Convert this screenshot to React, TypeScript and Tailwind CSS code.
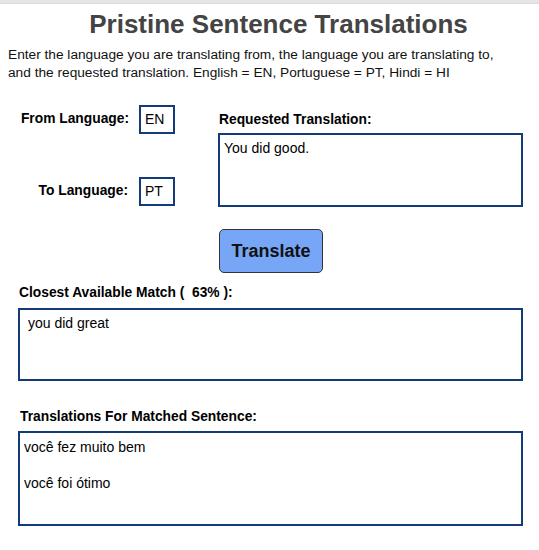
import React from "react";

export default function App() {
  const font = { fontFamily: '"Liberation Sans", Arial, sans-serif' };
  return (
    <div className="w-[539px] h-[550px] bg-white text-black overflow-hidden" style={font}>
      <div className="h-[4px] bg-[#e6e6e6] border-b border-[#dcdcdc]" />
      <h1 className="mt-[4px] pl-[18px] text-center text-[26px] leading-[32px] font-bold text-[#444444]">
        Pristine Sentence Translations
      </h1>
      <p className="mt-[6px] w-[510px] px-[8px] text-[13.7px] leading-[18px] text-[#111]">
        Enter the language you are translating from, the language you are translating to, and the requested translation. English = EN, Portuguese = PT, Hindi = HI
      </p>
      <div className="mt-[23px] flex">
        <div className="w-[218px] flex flex-col gap-[43px]">
          <div className="flex items-center">
            <span className="w-[129px] text-right text-[13.8px] font-bold pr-0">From Language:</span>
            <div className="ml-[10px] w-[36px] h-[29px] border-2 border-[#123b78] px-[4px] text-[14px] leading-[24px]">EN</div>
          </div>
          <div className="flex items-center">
            <span className="w-[128px] text-right text-[13.8px] font-bold">To Language:</span>
            <div className="ml-[11px] w-[36px] h-[29px] border-2 border-[#123b78] px-[4px] text-[14px] leading-[24px]">PT</div>
          </div>
        </div>
        <div className="flex flex-col">
          <div className="pt-[7px] pl-[1px] text-[13.8px] leading-[16px] font-bold">Requested Translation:</div>
          <div className="mt-[5px] w-[305px] h-[74px] border-2 border-[#123b78] pl-[4px] pt-[5px] text-[14px] leading-[16px]">
            You did good.
          </div>
          <button className="mt-[22px] ml-[1px] w-[104px] h-[44px] rounded-[5px] border border-[#333] bg-[#77a6f7] text-[18px] font-bold text-[#111]">
            Translate
          </button>
        </div>
      </div>
      <div className="mt-[12px] pl-[19px] text-[13.8px] leading-[16px] font-bold">
        Closest Available Match (&nbsp; 63% ):
      </div>
      <div className="mt-[7px] ml-[18px] w-[505px] h-[73px] border-2 border-[#123b78] pl-[8px] pt-[5px] text-[14px] leading-[16px]">
        you did great
      </div>
      <div className="mt-[28px] pl-[20px] text-[13.8px] leading-[16px] font-bold">
        Translations For Matched Sentence:
      </div>
      <div className="mt-[6px] ml-[18px] w-[505px] h-[95px] border-2 border-[#123b78] pl-[4px] pt-[6px] text-[14px] leading-[16px]">
        <p>você fez muito bem</p>
        <p className="mt-[20px]">você foi ótimo</p>
      </div>
    </div>
  );
}
